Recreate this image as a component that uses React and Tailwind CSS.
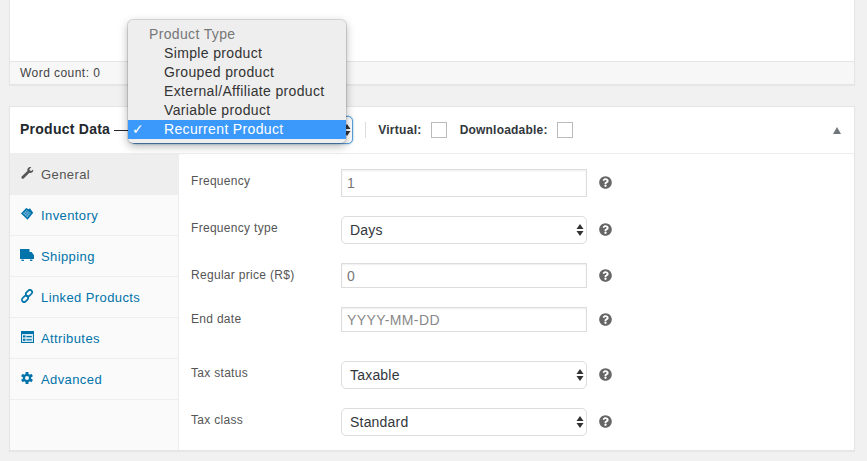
import React from 'react';
import { FaQuestionCircle } from 'react-icons/fa';

const WrenchIcon = () => (
  <svg width="14" height="14" viewBox="0 0 14 14" fill="currentColor">
    <path d="M9.2 1.2 C10 .9 11 1 11.3 1.2 L9.4 3.1 L9.9 4.6 L11.4 5.1 L13.1 3.4 C13.4 4.6 13 5.9 12 6.5 C11.1 7 10.1 7 9.4 6.7 L3.9 12.2 C3.3 12.9 2.3 12.9 1.8 12.4 C1.2 11.8 1.3 10.9 1.9 10.3 L7.4 4.9 C7 3.4 7.8 1.8 9.2 1.2 Z" />
  </svg>
);

const TagIcon = () => (
  <svg width="14" height="14" viewBox="0 0 14 14">
    <path d="M1 6.6 L6.2 1 L8.6 2.2 L10 1.2 L11 2.8 L13.2 5.8 L7.6 12.8 Z" fill="#0073aa" />
    <path d="M3 6.6 L6.6 3 L10.8 6 L7.4 10.4 Z" fill="#6fb2d4" />
    <path d="M4.4 5.4 L8.8 8.8 M6 4 L10 7.2 M6 9 L9.6 4.8 M4.4 7.6 L7.6 3.8" stroke="#0073aa" strokeWidth=".5" fill="none" />
  </svg>
);

const TruckIcon = () => (
  <svg width="14" height="14" viewBox="0 0 14 14" fill="currentColor">
    <path d="M0 1 H9.5 V4 H11.6 L14 7.2 V11 H0 Z" />
    <rect x="1.5" y="11.6" width="2.4" height="1.4" />
    <rect x="10" y="11.6" width="2.4" height="1.4" />
  </svg>
);

const LinkIcon = () => (
  <svg width="14" height="14" viewBox="0 0 14 14" fill="none" stroke="currentColor" strokeWidth="1.7">
    <rect x="6.8" y=".6" width="4.4" height="7" rx="2.2" transform="rotate(45 9 4.1)" />
    <rect x="2.8" y="6.4" width="4.4" height="7" rx="2.2" transform="rotate(45 5 9.9)" />
  </svg>
);

const AttributesIcon = () => (
  <svg width="14" height="14" viewBox="0 0 14 14">
    <rect x="1" y="1" width="13" height="12" fill="currentColor" />
    <rect x="2" y="4" width="11" height="8" fill="#d4e8f2" />
    <rect x="3" y="5.4" width="2.4" height="2" fill="#0073aa" />
    <rect x="3" y="8.8" width="2.4" height="2" fill="#0073aa" />
    <rect x="6.4" y="6" width="5.4" height="1.2" fill="#0073aa" />
    <rect x="6.4" y="9.2" width="5.4" height="1.2" fill="#0073aa" />
  </svg>
);

const GearIcon = () => (
  <svg width="14" height="14" viewBox="0 0 14 14">
    <g fill="currentColor">
      <circle cx="7" cy="7" r="4.2" />
      <rect x="5.5" y="1" width="3" height="12" rx=".5" />
      <rect x="5.5" y="1" width="3" height="12" rx=".5" transform="rotate(60 7 7)" />
      <rect x="5.5" y="1" width="3" height="12" rx=".5" transform="rotate(120 7 7)" />
    </g>
    <circle cx="7" cy="7" r="2" fill="#fafafa" />
  </svg>
);

const tabs = [
  { label: 'General', Icon: WrenchIcon, active: true },
  { label: 'Inventory', Icon: TagIcon },
  { label: 'Shipping', Icon: TruckIcon },
  { label: 'Linked Products', Icon: LinkIcon },
  { label: 'Attributes', Icon: AttributesIcon },
  { label: 'Advanced', Icon: GearIcon },
];

const menuItems = ['Simple product', 'Grouped product', 'External/Affiliate product', 'Variable product'];

const Arrows = ({ className }) => (
  <svg className={`absolute top-1/2 -translate-y-1/2 ${className}`} width="8" height="14" viewBox="0 0 8 14">
    <path d="M4 1 L7.5 6 H0.5 Z M4 13 L0.5 8 H7.5 Z" fill="#333" />
  </svg>
);

const Row = ({ label, className, helpClass, labelClass, children }) => (
  <div className={`flex items-center ${className}`}>
    <div className={`w-[150px] text-[12px] text-[#555] tracking-[0.3px] ${labelClass}`}>{label}</div>
    {children}
    <FaQuestionCircle className={`text-[#666] ml-[12px] shrink-0 ${helpClass}`} size={13} />
  </div>
);

const TextField = ({ value, placeholder, className }) => (
  <input
    readOnly
    value={value}
    placeholder={placeholder}
    className={`w-[246px] border border-[#ddd] bg-white px-[5px] text-[14px] tracking-[0.4px] text-[#777] placeholder:text-[#888] shadow-[inset_0_1px_2px_rgba(0,0,0,0.07)] outline-none ${className}`}
  />
);

const SelectField = ({ value }) => (
  <div className="relative w-[246px] h-[28px]">
    <div className="h-full border border-[#ddd] rounded-[5px] bg-white pl-[8px] text-[14px] tracking-[0.2px] leading-[27px] text-[#32373c]">{value}</div>
    <Arrows className="right-[3px]" />
  </div>
);

export default function App() {
  return (
    <div className="relative w-[867px] h-[461px] overflow-hidden bg-[#f1f1f1] font-['Liberation_Sans',sans-serif] pl-[9px]">
      {/* editor box, top cut off */}
      <div className="w-[846px] h-[85px] bg-white border border-t-0 border-[#e5e5e5] flex flex-col justify-end shadow-[0_1px_1px_rgba(0,0,0,0.04)]">
        <div className="h-[23px] bg-[#f7f7f7] border-t border-[#e5e5e5] pl-[10px] text-[12px] tracking-[0.45px] leading-[22px] text-[#444]">Word count: 0</div>
      </div>

      {/* product data box */}
      <div className="mt-[21px] w-[846px] h-[345px] bg-white border border-[#e5e5e5] flex flex-col shadow-[0_1px_1px_rgba(0,0,0,0.04)]">
        <div className="h-[47px] shrink-0 border-b border-[#eee] flex items-center pl-[10px]">
          <span className="text-[14px] font-bold text-[#23282d] tracking-[0.25px] -mt-[2px]">Product Data</span>
          <span className="ml-[4px] w-[14px] h-px bg-[#23282d]" />
          <div className="relative w-[223px] h-[28px] ml-[2px] shrink-0 border border-[#5b9dd9] rounded-[5px] bg-white shadow-[0_0_2px_rgba(30,140,190,0.6)]">
            <Arrows className="right-[1px]" />
          </div>
          <span className="ml-[12px] w-px h-[16px] bg-[#ddd]" />
          <span className="ml-[12px] text-[12px] font-bold text-[#32373c] tracking-[0.3px]">Virtual:</span>
          <span className="ml-[9px] w-[16px] h-[16px] border border-[#bbb] bg-white" />
          <span className="ml-[13px] text-[12px] font-bold text-[#32373c] tracking-[0.2px]">Downloadable:</span>
          <span className="ml-[9px] w-[16px] h-[16px] border border-[#bbb] bg-white" />
          <span className="ml-auto mr-[13px] w-0 h-0 border-x-[4px] border-x-transparent border-b-[7px] border-b-[#72777c]" />
        </div>
        <div className="flex flex-1 min-h-0">
          <ul className="w-[169px] shrink-0 bg-[#fafafa] border-r border-[#eee]">
            {tabs.map(({ label, Icon, active }) => (
              <li
                key={label}
                className={`h-[41px] flex items-center pl-[10px] text-[13px] tracking-[0.4px] ${active ? 'bg-[#eee] text-[#555]' : 'pt-[1px] border-b border-[#eee] text-[#0073aa]'}`}
              >
                <span className="w-[21px] -mt-[3px]"><Icon /></span>
                <span>{label}</span>
              </li>
            ))}
          </ul>
          <div className="flex-1 pl-[12px] pt-[15px]">
            <Row label="Frequency" className="h-[28px]" helpClass="-mt-[2px]" labelClass="-mt-[4px]">
              <TextField value="1" className="h-[28px]" />
            </Row>
            <Row label="Frequency type" className="mt-[19px] h-[28px]" helpClass="-mt-[2px]" labelClass="-mt-[4px]">
              <SelectField value="Days" />
            </Row>
            <Row label="Regular price (R$)" className="mt-[19px] h-[25px]" labelClass="-mt-[2px]">
              <TextField value="0" className="h-[25px]" />
            </Row>
            <Row label="End date" className="mt-[19px] h-[25px]" labelClass="-mt-[2px]">
              <TextField placeholder="YYYY-MM-DD" className="h-[25px]" />
            </Row>
            <Row label="Tax status" className="mt-[29px] h-[28px]" helpClass="-mt-[2px]" labelClass="-mt-[4px]">
              <SelectField value="Taxable" />
            </Row>
            <Row label="Tax class" className="mt-[19px] h-[28px]" helpClass="-mt-[2px]" labelClass="-mt-[4px]">
              <SelectField value="Standard" />
            </Row>
          </div>
        </div>
      </div>

      {/* native select menu, open over the header */}
      <div className="absolute left-[128px] top-[20px] w-[218px] h-[123px] rounded-[5px] bg-[#eee] pt-[5px] text-[14px] tracking-[0.35px] leading-[19px] text-[#333] shadow-[0_0_0_1px_rgba(0,0,0,0.12),0_3px_10px_rgba(0,0,0,0.3)]">
        <div className="pl-[21px] text-[#777]">Product Type</div>
        {menuItems.map((item) => (
          <div key={item} className="pl-[36px]">{item}</div>
        ))}
        <div className="relative pl-[36px] bg-[#3b99fc] text-white">
          <span className="absolute left-[4px] font-['DejaVu_Sans',sans-serif]">✓</span>
          Recurrent Product
        </div>
      </div>
    </div>
  );
}
